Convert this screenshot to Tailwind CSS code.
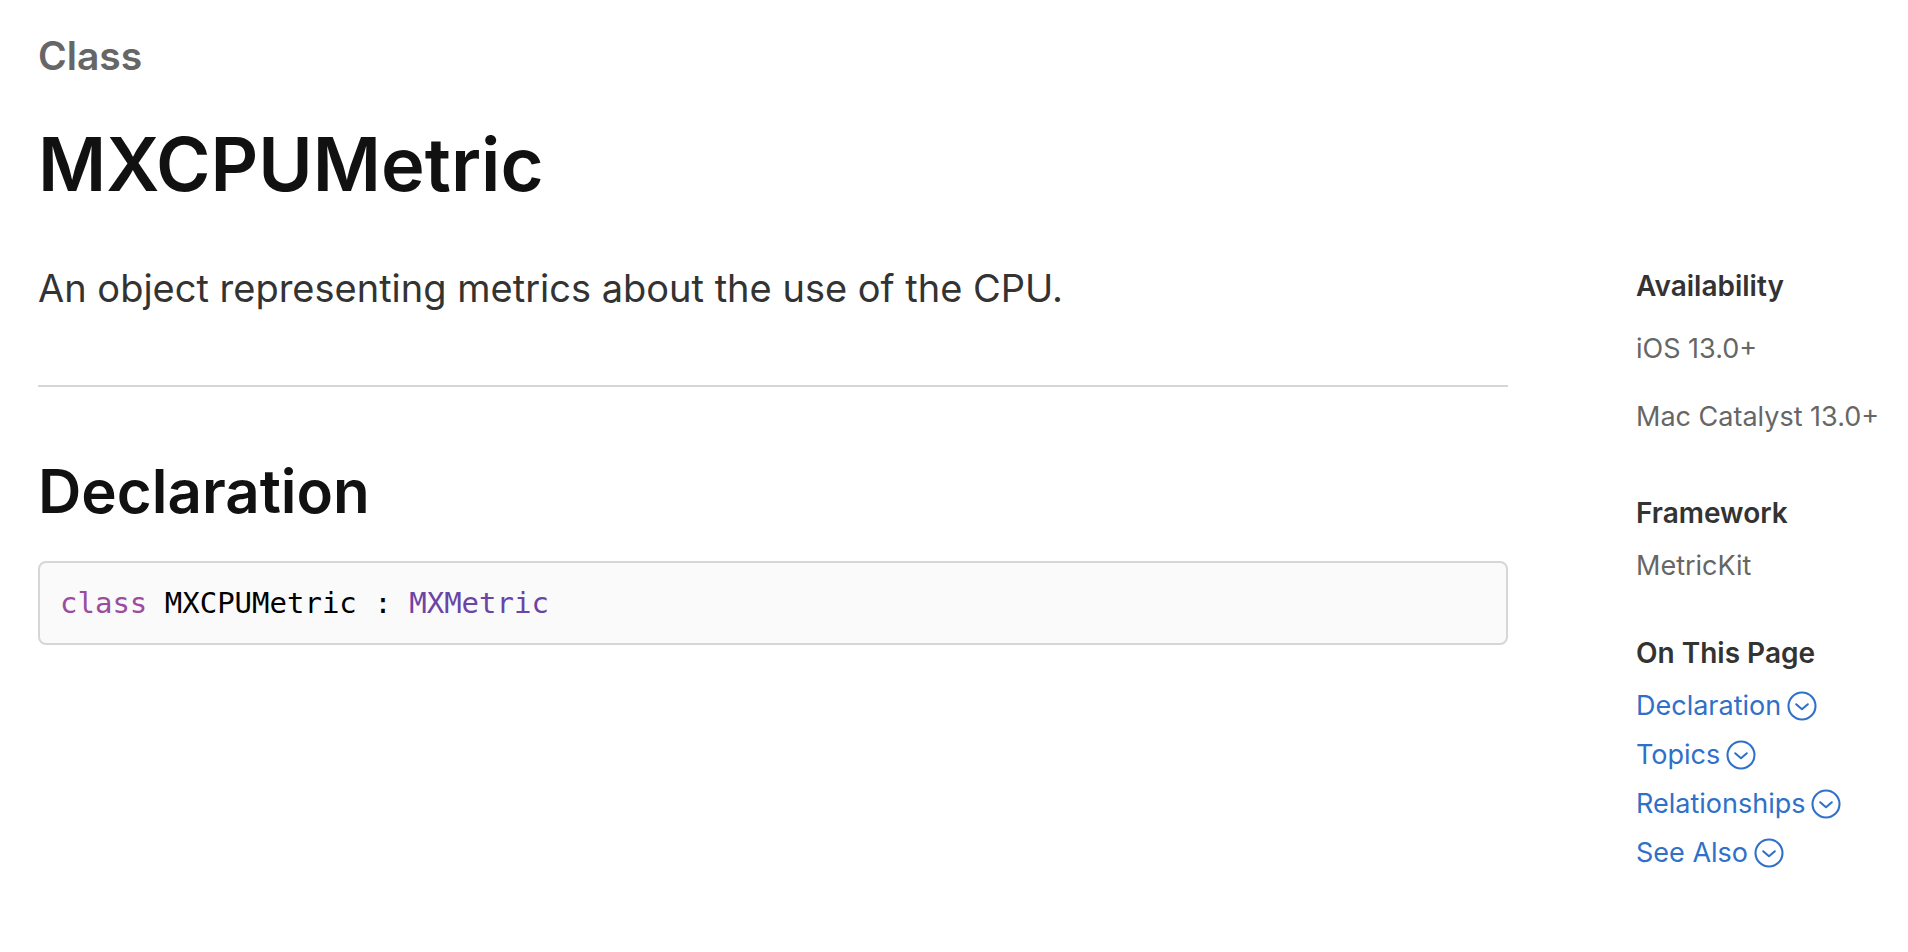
<!DOCTYPE html>
<html lang="en">
<head>
  <meta charset="UTF-8">
  <meta name="viewport" content="width=device-width, initial-scale=1.0">
  <title>MXCPUMetric</title>
  <script src="https://cdn.jsdelivr.net/npm/@tailwindcss/browser@4"></script>
</head>
<body class="bg-white font-['Inter','Liberation_Sans',sans-serif] text-[#333333]">

  <!-- chevron icon shared by the page links -->
  <svg class="hidden">
    <symbol id="chevron-circle" viewBox="0 0 30 30">
      <circle cx="15" cy="15" r="13.5" fill="none" stroke="currentColor" stroke-width="2.1" />
      <path d="M9.2 13.3 L15 18.2 L20.8 13.3" fill="none" stroke="currentColor" stroke-width="2.1" stroke-linecap="round" stroke-linejoin="round" />
    </symbol>
  </svg>

  <div class="flex gap-32 pl-[38px]">
    <main class="flex-1 min-w-0 pt-8">
      <p class="text-[39px] leading-[48px] font-semibold text-[#666666]">Class</p>
      <h1 class="mt-9 text-[74px] leading-[96px] font-semibold text-[#111111]">MXCPUMetric</h1>
      <p class="mt-12 text-[38px] leading-[56px]">An object representing metrics about the use of the CPU.</p>

      <section id="declaration" class="mt-[69px] pt-[68px] border-t-2 border-[#d6d6d6]">
        <h2 class="text-[60px] leading-[72px] font-semibold text-[#111111]">Declaration</h2>
        <pre class="mt-[34px] px-5 py-5 border-2 border-[#d6d6d6] rounded-lg bg-[#fafafa] text-[29px] leading-10 text-black font-['DejaVu_Sans_Mono','Liberation_Mono',monospace] overflow-x-auto"><code class="font-['DejaVu_Sans_Mono','Liberation_Mono',monospace]"><span class="text-[#9b4c9f]">class</span> MXCPUMetric : <a href="#" class="text-[#6a45a5]">MXMetric</a></code></pre>
      </section>
    </main>

    <aside class="w-[272px] shrink-0 pt-[266px] text-[27px] leading-10 whitespace-nowrap text-[#666666]">
      <section>
        <h3 class="text-[28px] font-semibold text-[#333333]">Availability</h3>
        <ul class="mt-[23px] flex flex-col gap-7">
          <li>iOS 13.0+</li>
          <li>Mac Catalyst 13.0+</li>
        </ul>
      </section>

      <section class="mt-14">
        <h3 class="text-[28px] font-semibold text-[#333333]">Framework</h3>
        <p class="mt-[13px]">MetricKit</p>
      </section>

      <nav class="mt-[47px]">
        <h3 class="text-[28px] font-semibold text-[#333333]">On This Page</h3>
        <ul class="mt-[13px] flex flex-col gap-[9px] text-[#2f70c8]">
          <li><a href="#declaration" class="flex items-center gap-1.5">Declaration <svg class="size-[30px]"><use href="#chevron-circle" /></svg></a></li>
          <li><a href="#topics" class="flex items-center gap-1.5">Topics <svg class="size-[30px]"><use href="#chevron-circle" /></svg></a></li>
          <li><a href="#relationships" class="flex items-center gap-1.5">Relationships <svg class="size-[30px]"><use href="#chevron-circle" /></svg></a></li>
          <li><a href="#see-also" class="flex items-center gap-1.5">See Also <svg class="size-[30px]"><use href="#chevron-circle" /></svg></a></li>
        </ul>
      </nav>
    </aside>
  </div>

</body>
</html>
